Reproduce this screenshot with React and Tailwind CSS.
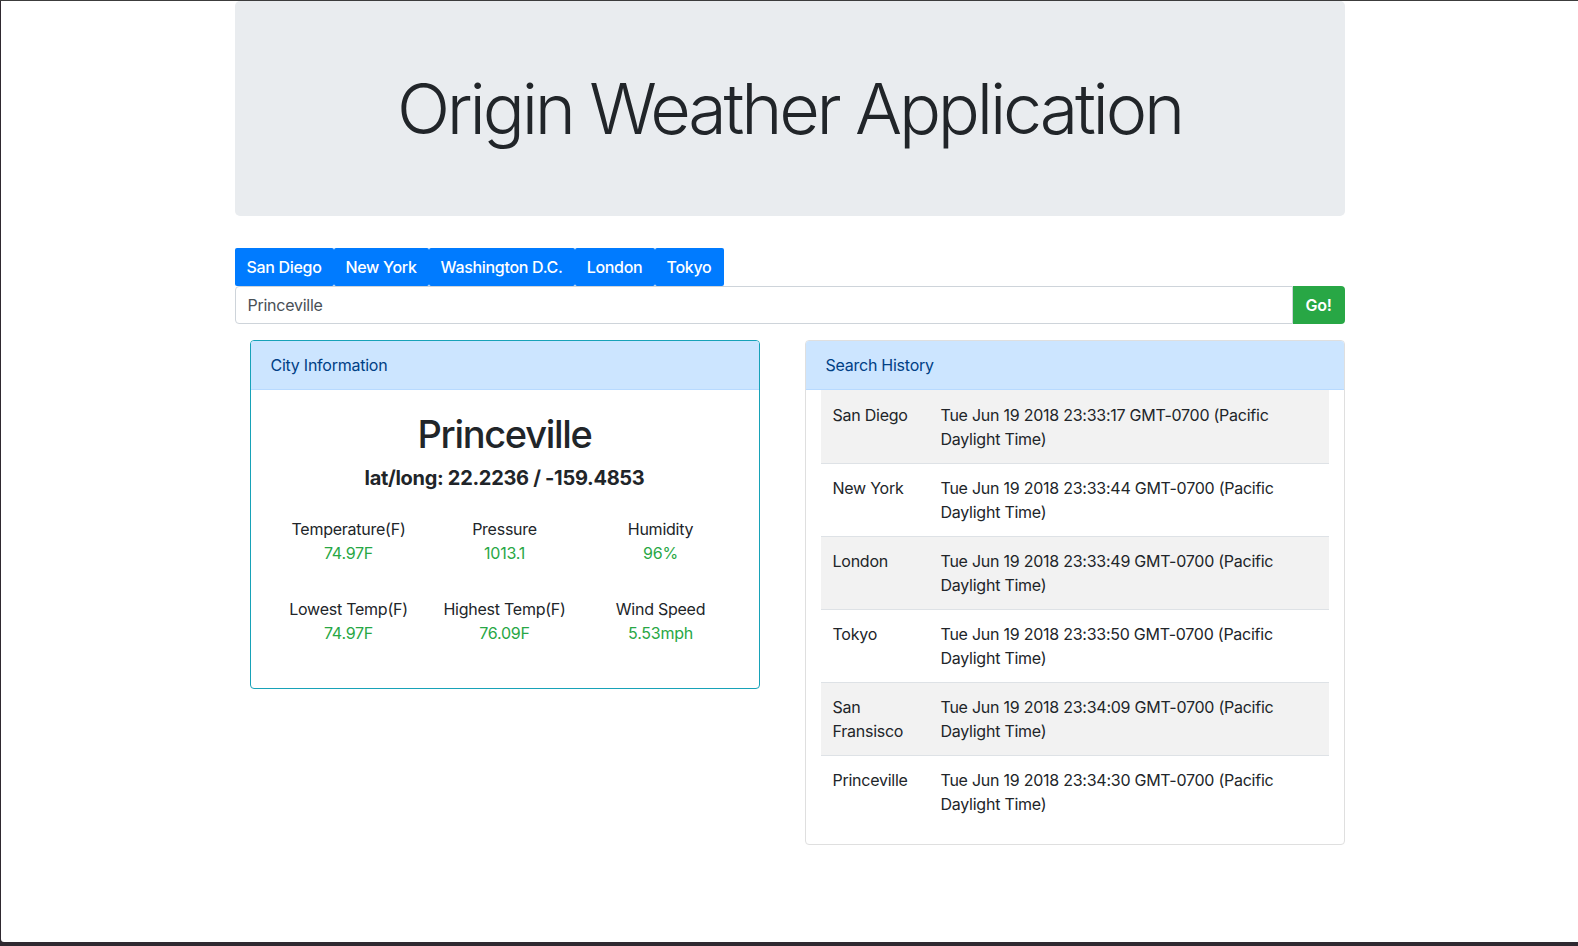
import React from "react";

const cities = [
  { name: "San Diego", w: "w-[99px]" },
  { name: "New York", w: "w-[95px]" },
  { name: "Washington D.C.", w: "w-[146px]" },
  { name: "London", w: "w-[80px]" },
  { name: "Tokyo", w: "w-[69px]" },
];

const stats = [
  { label: "Temperature(F)", value: "74.97F" },
  { label: "Pressure", value: "1013.1" },
  { label: "Humidity", value: "96%" },
  { label: "Lowest Temp(F)", value: "74.97F" },
  { label: "Highest Temp(F)", value: "76.09F" },
  { label: "Wind Speed", value: "5.53mph" },
];

const history = [
  { city: "San Diego", time: "Tue Jun 19 2018 23:33:17 GMT-0700 (Pacific Daylight Time)" },
  { city: "New York", time: "Tue Jun 19 2018 23:33:44 GMT-0700 (Pacific Daylight Time)" },
  { city: "London", time: "Tue Jun 19 2018 23:33:49 GMT-0700 (Pacific Daylight Time)" },
  { city: "Tokyo", time: "Tue Jun 19 2018 23:33:50 GMT-0700 (Pacific Daylight Time)" },
  { city: "San Fransisco", time: "Tue Jun 19 2018 23:34:09 GMT-0700 (Pacific Daylight Time)" },
  { city: "Princeville", time: "Tue Jun 19 2018 23:34:30 GMT-0700 (Pacific Daylight Time)" },
];

const App = () => {
  return (
    <div
      className="w-full h-[946px] flex flex-col bg-[#2f2930] text-[#212529] tracking-[-0.25px]"
      style={{ fontFamily: "Inter, 'Noto Sans', sans-serif" }}
    >
      <div className="h-px bg-[#3c3c3c]" />
      <div className="flex-1 ml-px mb-[4px] bg-white rounded-bl-[3px]">
        <div className="w-[1110px] mx-auto">
          {/* jumbotron */}
          <div className="h-[215px] flex items-center justify-center bg-[#e9ecef] rounded-[5px]">
            <h1 className="text-[70px] font-light leading-[86px] tracking-[-3.2px]">
              Origin Weather Application
            </h1>
          </div>

          {/* city buttons */}
          <div className="mt-8 flex">
            {cities.map((c) => (
              <button
                key={c.name}
                className={`${c.w} h-[38px] bg-[#007bff] text-white text-base font-medium rounded-[2px] tracking-[-0.3px]`}
              >
                {c.name}
              </button>
            ))}
          </div>

          {/* search */}
          <div className="flex h-[38px]">
            <div className="flex-1 flex items-center px-3 border border-[#ced4da] rounded-l-[4px] text-[#495057] text-base">
              Princeville
            </div>
            <button className="w-[52px] bg-[#28a745] text-white font-semibold rounded-r-[4px]">
              Go!
            </button>
          </div>

          <div className="mt-4 flex items-start">
            {/* city info */}
            <div className="ml-[15px] w-[510px] border border-[#17a2b8] rounded-[4px] overflow-hidden">
              <div className="h-[49px] flex items-center px-5 bg-[#cce5ff] text-[#004085] border-b border-[#b8daff]">
                City Information
              </div>
              <div className="px-5 pt-5 pb-[43px] text-center">
                <h2 className="text-[38px] font-medium leading-[48px] mb-2 tracking-[-1.3px]">Princeville</h2>
                <h5 className="text-[20px] font-bold leading-6 tracking-[-0.3px]">lat/long: 22.2236 / -159.4853</h5>
                <div className="mt-[27px] grid grid-cols-3 gap-y-8">
                  {stats.map((s) => (
                    <div key={s.label} className="leading-6">
                      <div>{s.label}</div>
                      <div className="text-[#28a745]">{s.value}</div>
                    </div>
                  ))}
                </div>
              </div>
            </div>

            {/* search history */}
            <div className="ml-auto w-[540px] border border-[#dfdfdf] rounded-[4px] overflow-hidden">
              <div className="h-[49px] flex items-center px-5 bg-[#cce5ff] text-[#004085] border-b border-[#b8daff]">
                Search History
              </div>
              <div className="px-[15px] pb-[16px]">
                <table className="w-full table-fixed border-collapse">
                  <colgroup>
                    <col className="w-[108px]" />
                    <col />
                  </colgroup>
                  <tbody>
                    {history.map((h, i) => (
                      <tr key={i} className={i % 2 === 0 ? "bg-[#f2f2f2]" : ""}>
                        <td className={`align-top p-3 leading-6 ${i > 0 ? "border-t border-[#dee2e6]" : "pt-[13px]"}`}>
                          {h.city}
                        </td>
                        <td className={`align-top p-3 leading-6 ${i > 0 ? "border-t border-[#dee2e6]" : "pt-[13px]"}`}>
                          {h.time}
                        </td>
                      </tr>
                    ))}
                  </tbody>
                </table>
              </div>
            </div>
          </div>
        </div>
      </div>
    </div>
  );
};

export default App;
